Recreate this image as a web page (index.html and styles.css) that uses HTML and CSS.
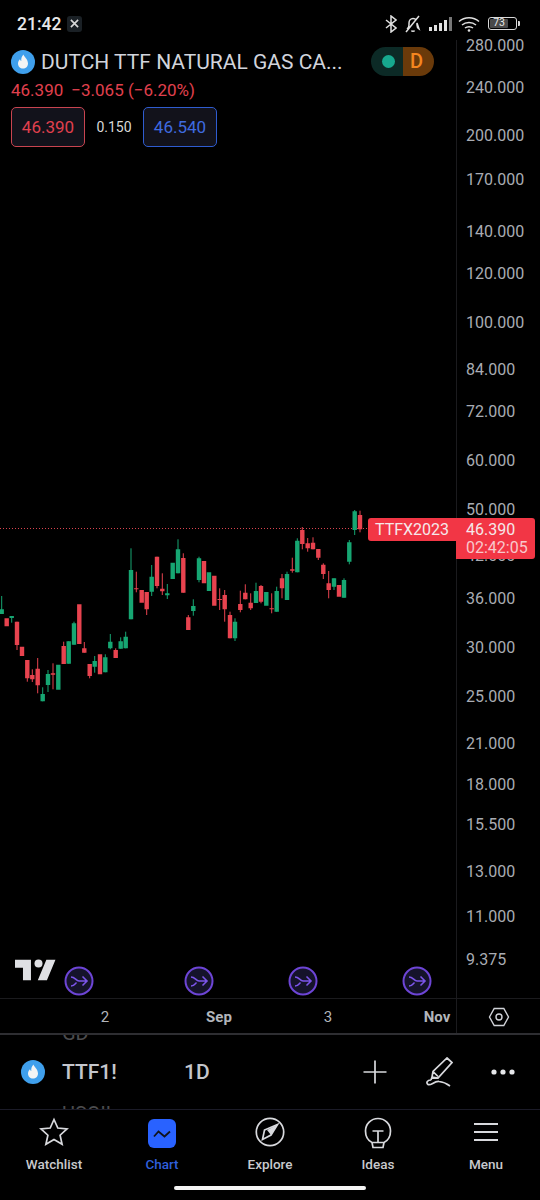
FILE: index.html
```html
<!DOCTYPE html>
<html lang="en">
<head>
    <meta charset="UTF-8">
    <meta name="viewport" content="width=device-width, initial-scale=1.0">
    <title>TTF1! chart</title>
    <link rel="stylesheet" href="styles.css">
</head>
<body>
    <div class="pantalla">
        <div class="status">
            <div class="status-left">
                <span class="hora">21:42</span>
                <span class="badge-x">
                    <svg width="9" height="9" viewBox="0 0 10 10"><path d="M1 1l8 8M9 1L1 9" class="trazo-x"/></svg>
                </span>
            </div>
            <div class="status-right">
                <svg width="12" height="18" viewBox="0 0 12 18" class="st-icon"><path d="M1 5l10 8-5 4V1l5 4-10 8"/></svg>
                <svg width="18" height="18" viewBox="0 0 18 18" class="st-icon"><path d="M3 14c1.500-1 2-2 2-4V8c0-2.500 1.800-4.500 4-4.500 1.300 0 2.400.5 3.200 1.500M13 8v2c0 2 .5 3 2 4zM7.500 15.500c.3 1 2.700 1 3 0M2 17L15 1"/></svg>
                <svg width="23" height="14" viewBox="0 0 23 14" class="st-signal">
                    <rect x="0" y="10" width="3" height="4"/>
                    <rect x="5" y="8" width="3" height="6"/>
                    <rect x="10" y="6" width="3" height="8"/>
                    <rect x="15" y="3" width="3" height="11"/>
                    <rect x="20" y="0" width="3" height="14" class="apagada"/>
                </svg>
                <svg width="23" height="16" viewBox="0 0 23 16" class="st-icon st-wifi">
                    <path d="M1 5.500c5.500-5 14.500-5 20 0M4 9c3.800-3.300 10.200-3.300 14 0M7 12c2.200-1.800 5.800-1.800 8 0"/>
                    <circle cx="11" cy="14.500" r="1.300"/>
                </svg>
                <span class="bateria"><span class="bateria-nivel">73</span></span>
                <span class="bateria-punta"></span>
            </div>
        </div>

        <div class="grafico">
            <svg class="lienzo" width="540" height="995" viewBox="0 40 540 995">
                <path class="linea-eje" d="M456.500 40V1034M0 998.500H540"/>
                <path class="linea-base" d="M0 1034H540"/>
                <path class="linea-precio" d="M0 528.500H368"/>

                <path class="mecha verde" d="M1.700 596V614M11.700 616V622.700M42.700 687.300V701.300M48 670V692M68.700 641.300V663.700M74 621.700V644.700M94.700 656V672.700M105.300 654.300V672.300M110.300 634V649.300M120.700 637.300V648.700M125.700 631.700V648.300M131 548.300V619.300M151.700 565V596M167.300 584V599M178 539.300V573.300M193.300 599.300V615.700M199 556.700V582.300M235 618.300V641M256 582.700V603M276.700 586.700V611.700M287 571.700V600M297.300 538.300V572.300M334 578.300V590M344 578.300V597.700M349.300 540V564.300M354.700 510V535"/>
                <path class="cuerpo verde" d="M1.700 609.300V614M11.700 616V618M42.700 694V701.300M48 674V685M58.300 664.700V689.700M68.700 641.300V663.700M74 623.300V644.700M94.700 661V666.700M105.300 657.300V672.300M110.300 641.700V648.300M120.700 641.300V648.700M125.700 636.700V648.300M131 570V619.300M151.700 576.700V591.700M167.300 593.300V595.300M172.700 562.700V579M178 549.300V573.300M193.300 606V611M199 558.300V580M209 572.300V591M235 621.700V638.300M256 591V603M266.300 592V605.700M276.700 591V611.700M287 574V600M297.300 540.700V572.300M334 578.300V586.700M344 580V597.700M349.300 542.300V561.700M354.700 511.300V530"/>
                <path class="mecha rojo" d="M17 621.700V650M27.300 660V681.700M32.300 669.300V682M37.700 658V693.300M53 663.300V689.300M63.700 641.700V664M84.300 642V652.700M89.700 664V678.300M115.700 648.300V658M136.300 571.700V592.300M146.700 592V615M157 556.700V588.300M162.300 573.300V595M183.300 553.300V592.700M188.300 615V630M219.700 588.300V610M224.700 590V621.700M230 611.700V638.300M240.300 590.700V612.300M245.300 584.300V599.300M250.700 593.300V610M261 585V603.300M271.700 593.300V613.300M282 574V598.300M292.300 557.700V572.700M302.300 527V549.300M307.700 538V551.700M313 537.300V549.300M318.300 549V560M323.300 563.300V579M328.700 571V598.300M360 510.700V532.300"/>
                <path class="cuerpo rojo" d="M6.700 618.300V626.300M17 621.700V645M22 646.700V656M27.300 660V678.300M32.300 675V679.300M37.700 668.700V685.300M53 673.300V674.700M63.700 646V664M79.300 604.300V644M84.300 648.300V652.700M89.700 664V676M100 654.300V674.300M115.700 650V658M136.300 588.300V589.300M141.700 590V602.700M146.700 592V609.300M157 556.700V586M162.300 588.700V591.300M183.300 558V592.700M188.300 617.300V630M204 561V583.300M214.300 575.700V605.700M219.700 599V600M224.700 595V609.300M230 615V638.300M240.300 604V610M245.300 592.700V599.300M250.700 602.700V608.300M261 586V601.700M271.700 608.300V609.300M282 578.300V588.300M292.300 569.300V570.700M302.300 530V544M307.700 543.300V548.300M313 542.700V549.300M318.300 549V557.700M323.300 564.700V574M328.700 583.300V590M339 585V596.700M360 515V529.300"/>

                <g class="precios">
                    <text x="466" y="51">280.000</text>
                    <text x="466" y="93">240.000</text>
                    <text x="466" y="141">200.000</text>
                    <text x="466" y="185">170.000</text>
                    <text x="466" y="237">140.000</text>
                    <text x="466" y="279">120.000</text>
                    <text x="466" y="328">100.000</text>
                    <text x="466" y="375">84.000</text>
                    <text x="466" y="417">72.000</text>
                    <text x="466" y="466">60.000</text>
                    <text x="466" y="515">50.000</text>
                    <text x="466" y="561">42.000</text>
                    <text x="466" y="604">36.000</text>
                    <text x="466" y="653">30.000</text>
                    <text x="466" y="702">25.000</text>
                    <text x="466" y="749">21.000</text>
                    <text x="466" y="790">18.000</text>
                    <text x="466" y="830">15.500</text>
                    <text x="466" y="877">13.000</text>
                    <text x="466" y="922">11.000</text>
                    <text x="466" y="965">9.375</text>
                </g>

                <g class="fechas">
                    <text x="105" y="1022">2</text>
                    <text x="219" y="1022" class="fuerte">Sep</text>
                    <text x="328" y="1022">3</text>
                    <text x="437" y="1022" class="fuerte">Nov</text>
                </g>

                <path class="logo-tv" transform="translate(15 957.500) scale(1.140)" d="M14 20H7V9H0V2h14v18zM28 20h-8l7.500-18h8L28 20z"/>
                <circle class="logo-tv" cx="38.500" cy="963.500" r="4"/>

                <defs>
                    <g id="marca">
                        <circle r="13.500" class="marca-aro"/>
                        <path class="marca-flecha" d="M-8 -4C-4 -4 -3 0 0 0H8M3.500 -4.500L8 0L3.500 4.500M-8 5C-5 5 -4 3 -2.500 1.500"/>
                    </g>
                </defs>
                <use href="#marca" x="79" y="981"/>
                <use href="#marca" x="199" y="981"/>
                <use href="#marca" x="303" y="981"/>
                <use href="#marca" x="417" y="981"/>

                <path class="tuerca" d="M489.500 1017l4.700-8.500h9.600l4.700 8.500-4.700 8.500h-9.600z"/>
                <circle class="tuerca" cx="499" cy="1017" r="3"/>
            </svg>

            <div class="leyenda">
                <div class="leyenda-titulo">
                    <svg class="llama" width="24" height="24" viewBox="0 0 24 24">
                        <circle cx="12" cy="12" r="12" class="llama-fondo"/>
                        <path class="llama-fuego" d="M12.500 4.500c.5 2.500 4.500 4.500 4.500 9 0 3-2.200 5-5 5s-5-2-5-5c0-2 1-3.300 2-4.300.2 1 .7 1.600 1.300 1.800-.3-2.500.4-4.800 2.200-6.500z"/>
                    </svg>
                    <span class="nombre">DUTCH TTF NATURAL GAS CA...</span>
                    <span class="pildora">
                        <span class="pildora-estado"><i class="punto"></i></span>
                        <span class="pildora-tipo">D</span>
                    </span>
                </div>
                <div class="cambio">
                    <span>46.390</span>
                    <span>−3.065 (−6.20%)</span>
                </div>
                <div class="cotiza">
                    <span class="caja caja-venta">46.390</span>
                    <span class="spread">0.150</span>
                    <span class="caja caja-compra">46.540</span>
                </div>
            </div>

            <div class="etiqueta etiqueta-simbolo">TTFX2023</div>
            <div class="etiqueta etiqueta-precio">
                <span>46.390</span>
                <span class="cuenta">02:42:05</span>
            </div>
        </div>

        <div class="barra-simbolo">
            <span class="fantasma fantasma-arriba">GD</span>
            <span class="fantasma fantasma-abajo">USO!!</span>
            <svg class="llama" width="24" height="24" viewBox="0 0 24 24">
                <circle cx="12" cy="12" r="12" class="llama-fondo"/>
                <path class="llama-fuego" d="M12.500 4.500c.5 2.500 4.500 4.500 4.500 9 0 3-2.200 5-5 5s-5-2-5-5c0-2 1-3.300 2-4.300.2 1 .7 1.600 1.300 1.800-.3-2.500.4-4.800 2.200-6.500z"/>
            </svg>
            <span class="simbolo">TTF1!</span>
            <span class="intervalo">1D</span>
            <div class="acciones">
                <svg width="24" height="24" viewBox="0 0 24 24" class="ico"><path d="M12 .5v23M.5 12h23"/></svg>
                <svg width="28" height="30" viewBox="0 0 28 30" class="ico ico-pluma"><path d="M22 1l5 4.500L13 21l-6-1 1-5.500zM8 14.500l5 5M7 20l-1 3M6 23c-4 0-5 3-3 4.500 3 1.500 6-3.500 11-3 4 .3 7 1.500 11 4.500"/></svg>
                <svg width="24" height="6" viewBox="0 0 24 6" class="ico-puntos"><circle cx="3" cy="3" r="2.600"/><circle cx="12" cy="3" r="2.600"/><circle cx="21" cy="3" r="2.600"/></svg>
            </div>
        </div>

        <nav class="tabs">
            <a class="tab">
                <svg width="30" height="32" viewBox="0 0 30 32" class="ico"><path d="M15 2.500l3.800 8.500 9.200 1-6.900 6.200 2 9.100-8.100-4.700-8.100 4.700 2-9.100L2 12l9.200-1z"/></svg>
                <span>Watchlist</span>
            </a>
            <a class="tab activa">
                <span class="chip">
                    <svg width="18" height="10" viewBox="0 0 18 10"><path d="M1 7.500l4.500-5 6 5 5.500-5"/></svg>
                </span>
                <span>Chart</span>
            </a>
            <a class="tab">
                <svg width="30" height="32" viewBox="0 0 30 32" class="ico">
                    <circle cx="15" cy="15" r="13.700"/>
                    <path d="M22.500 7.500l-13 5.500-2 9.500 8.500-4.500z"/>
                    <path class="relleno" d="M22.500 7.500L12 13l4 5z"/>
                </svg>
                <span>Explore</span>
            </a>
            <a class="tab">
                <svg width="28" height="32" viewBox="0 0 28 32" class="ico">
                    <path d="M8 25.500C4 23.500 1.500 19.500 1.500 14 1.500 7 7 1.500 14 1.500S26.500 7 26.500 14c0 5.500-2.500 9.500-6.500 11.500zM8 25.500h12l-1 5H9zM8.500 14h11M14 14v11"/>
                </svg>
                <span>Ideas</span>
            </a>
            <a class="tab">
                <svg width="26" height="32" viewBox="0 0 26 32" class="ico ico-menu"><path d="M1 7h24M1 15h24M1 23h24"/></svg>
                <span>Menu</span>
            </a>
        </nav>
        <div class="home"></div>
    </div>
</body>
</html>
```

FILE: styles.css
```css
* {
    box-sizing: border-box;
}

body {
    margin: 0;
    background: #000;
    font-family: 'Roboto', 'Liberation Sans', sans-serif;
    color: #d1d4dc;
    overflow: hidden;
}

.pantalla {
    width: 540px;
    height: 1200px;
    display: flex;
    flex-direction: column;
    position: relative;
    background: #000;
}

/* barra de estado */
.status {
    height: 40px;
    flex: none;
    display: flex;
    justify-content: space-between;
    align-items: center;
    padding: 7px 20px 0 17px;
}

.status-left {
    display: flex;
    align-items: center;
    gap: 6px;
}

.hora {
    font-size: 17.500px;
    font-weight: 500;
    color: #e8e8e8;
}

.badge-x {
    width: 15px;
    height: 16px;
    border-radius: 3px;
    background: #1a2025;
    display: flex;
    justify-content: center;
    align-items: center;
}

.trazo-x {
    stroke: #d8d8d8;
    stroke-width: 1.800;
    fill: none;
}

.status-right {
    display: flex;
    align-items: center;
}

.st-icon {
    fill: none;
    stroke: #e0e0e0;
    stroke-width: 1.500;
    margin-right: 7px;
}

.st-signal {
    fill: #e0e0e0;
    margin: 0 6px 0 0;
}

.st-signal .apagada {
    fill: #777;
}

.st-wifi circle {
    fill: #e0e0e0;
    stroke: none;
}

.bateria {
    width: 29px;
    height: 13px;
    border: 1.500px solid #d8d8d8;
    border-radius: 3px;
    padding: 1px;
    display: flex;
}

.bateria-nivel {
    width: 73%;
    background: #4a4a4a;
    border-radius: 1px;
    font-size: 10.500px;
    line-height: 8px;
    text-align: center;
    color: #e8e8e8;
}

.bateria-punta {
    width: 2px;
    height: 5px;
    margin-left: 1px;
    background: #d8d8d8;
    border-radius: 0 1px 1px 0;
}

/* grafico */
.grafico {
    height: 995px;
    flex: none;
    position: relative;
}

.lienzo {
    display: block;
    overflow: visible;
}

.linea-eje {
    stroke: #1b1b1e;
    stroke-width: 1;
    fill: none;
}

.linea-base {
    stroke: #2e2e32;
    stroke-width: 2;
}

.linea-precio {
    stroke: #d9434f;
    stroke-width: 1;
    stroke-dasharray: 1 2;
}

.mecha {
    stroke-width: 1;
    fill: none;
}

.cuerpo {
    stroke-width: 4.400;
    fill: none;
}

.verde {
    stroke: #16a672;
}

.rojo {
    stroke: #e8434f;
}

.precios text {
    font-size: 16px;
    fill: #a9acb3;
}

.fechas text {
    font-size: 15px;
    fill: #b2b5bb;
    text-anchor: middle;
}

.fechas .fuerte {
    font-weight: 700;
}

.logo-tv {
    fill: #dfe0e4;
}

.marca-aro {
    fill: #15132b;
    stroke: #6d45d6;
    stroke-width: 2;
}

.marca-flecha {
    fill: none;
    stroke: #7c55ea;
    stroke-width: 1.600;
}

.tuerca {
    fill: none;
    stroke: #d0d2d8;
    stroke-width: 1.400;
}

/* leyenda sobre el grafico */
.leyenda {
    position: absolute;
    left: 11px;
    top: 7px;
    width: 423px;
    display: flex;
    flex-direction: column;
}

.leyenda-titulo {
    height: 29px;
    display: flex;
    align-items: center;
}

.nombre {
    margin-left: 6px;
    font-size: 21px;
    color: #d1d4dc;
    white-space: nowrap;
}

.pildora {
    margin-left: auto;
    height: 29px;
    width: 63px;
    display: flex;
    border-radius: 15px;
    overflow: hidden;
}

.pildora-estado {
    width: 32px;
    background: #0c2a26;
    display: flex;
    justify-content: center;
    align-items: center;
}

.punto {
    width: 13px;
    height: 13px;
    margin-left: 3px;
    border-radius: 50%;
    background: #17a88e;
}

.pildora-tipo {
    flex: 1;
    background: #6a3a0a;
    color: #f5861f;
    font-size: 20px;
    font-weight: 500;
    line-height: 29px;
    padding-left: 7px;
}

.cambio {
    margin-top: 4px;
    height: 20px;
    display: flex;
    gap: 8px;
    align-items: center;
    font-size: 17px;
    color: #e0404e;
}

.cotiza {
    margin-top: 7px;
    display: flex;
    align-items: center;
}

.caja {
    width: 74px;
    height: 40px;
    border-radius: 5px;
    background: #12121b;
    font-size: 17px;
    display: flex;
    justify-content: center;
    align-items: center;
}

.caja-venta {
    border: 1px solid #c84450;
    color: #e0404e;
}

.caja-compra {
    border: 1px solid #2f5cd0;
    color: #3f6be0;
}

.spread {
    width: 58px;
    text-align: center;
    font-size: 14px;
    color: #d8d8d8;
}

/* etiquetas de precio */
.etiqueta {
    position: absolute;
    background: #f23645;
    color: #f5e8ea;
    font-size: 16px;
}

.etiqueta-simbolo {
    left: 368px;
    top: 478px;
    width: 88px;
    height: 23px;
    line-height: 23px;
    padding-left: 7px;
    border-radius: 3px 0 0 3px;
}

.etiqueta-precio {
    left: 456px;
    top: 478px;
    width: 79px;
    height: 41px;
    padding: 3px 0 0 10px;
    border-radius: 0 3px 3px 0;
    display: flex;
    flex-direction: column;
    line-height: 18px;
}

.cuenta {
    color: #f8c8cc;
}

/* barra del simbolo */
.barra-simbolo {
    height: 75px;
    flex: none;
    position: relative;
    overflow: hidden;
    display: flex;
    align-items: center;
    padding-left: 21px;
    border-bottom: 1px solid #1b1b28;
}

.fantasma {
    position: absolute;
    left: 62px;
    font-size: 20px;
    line-height: 24px;
    color: #4c4c4e;
}

.fantasma-arriba {
    top: -14px;
}

.fantasma-abajo {
    bottom: -17px;
}

.simbolo {
    margin-left: 17px;
    width: 122px;
    font-size: 21px;
    font-weight: 500;
    color: #c4c6cc;
}

.intervalo {
    font-size: 21px;
    font-weight: 500;
    color: #c4c6cc;
}

.llama-fondo {
    fill: #3f9fec;
}

.llama-fuego {
    fill: #f4f4f4;
}

.acciones {
    margin-left: auto;
    margin-right: 25px;
    display: flex;
    align-items: center;
    gap: 37px;
}

.ico {
    fill: none;
    stroke: #d8d9dd;
    stroke-width: 1.700;
}

.ico .relleno {
    fill: #d8d9dd;
    stroke: none;
}

.ico-pluma {
    margin: 0 1px;
}

.ico-menu {
    stroke-width: 2.200;
}

.ico-puntos {
    fill: #e6e7ea;
}

/* pestanas */
.tabs {
    display: grid;
    grid-template-columns: repeat(5, 108px);
    flex: none;
}

.tab {
    height: 60px;
    padding-top: 7px;
    display: flex;
    flex-direction: column;
    align-items: center;
    font-size: 13.500px;
    font-weight: 500;
    color: #c8c9cd;
}

.tab svg {
    flex: none;
}

.tab span:last-child {
    margin-top: 7px;
}

.tab.activa {
    color: #2f5fdc;
}

.chip {
    width: 28px;
    height: 29px;
    margin-top: 2px;
    margin-bottom: 1px;
    border-radius: 6px;
    background: #2962ff;
    display: flex;
    justify-content: center;
    align-items: center;
    flex: none;
}

.chip svg {
    fill: none;
    stroke: #10131c;
    stroke-width: 1.800;
}

.home {
    position: absolute;
    left: 174px;
    top: 1186px;
    width: 192px;
    height: 4px;
    border-radius: 2px;
    background: #f5f5f5;
}
```
